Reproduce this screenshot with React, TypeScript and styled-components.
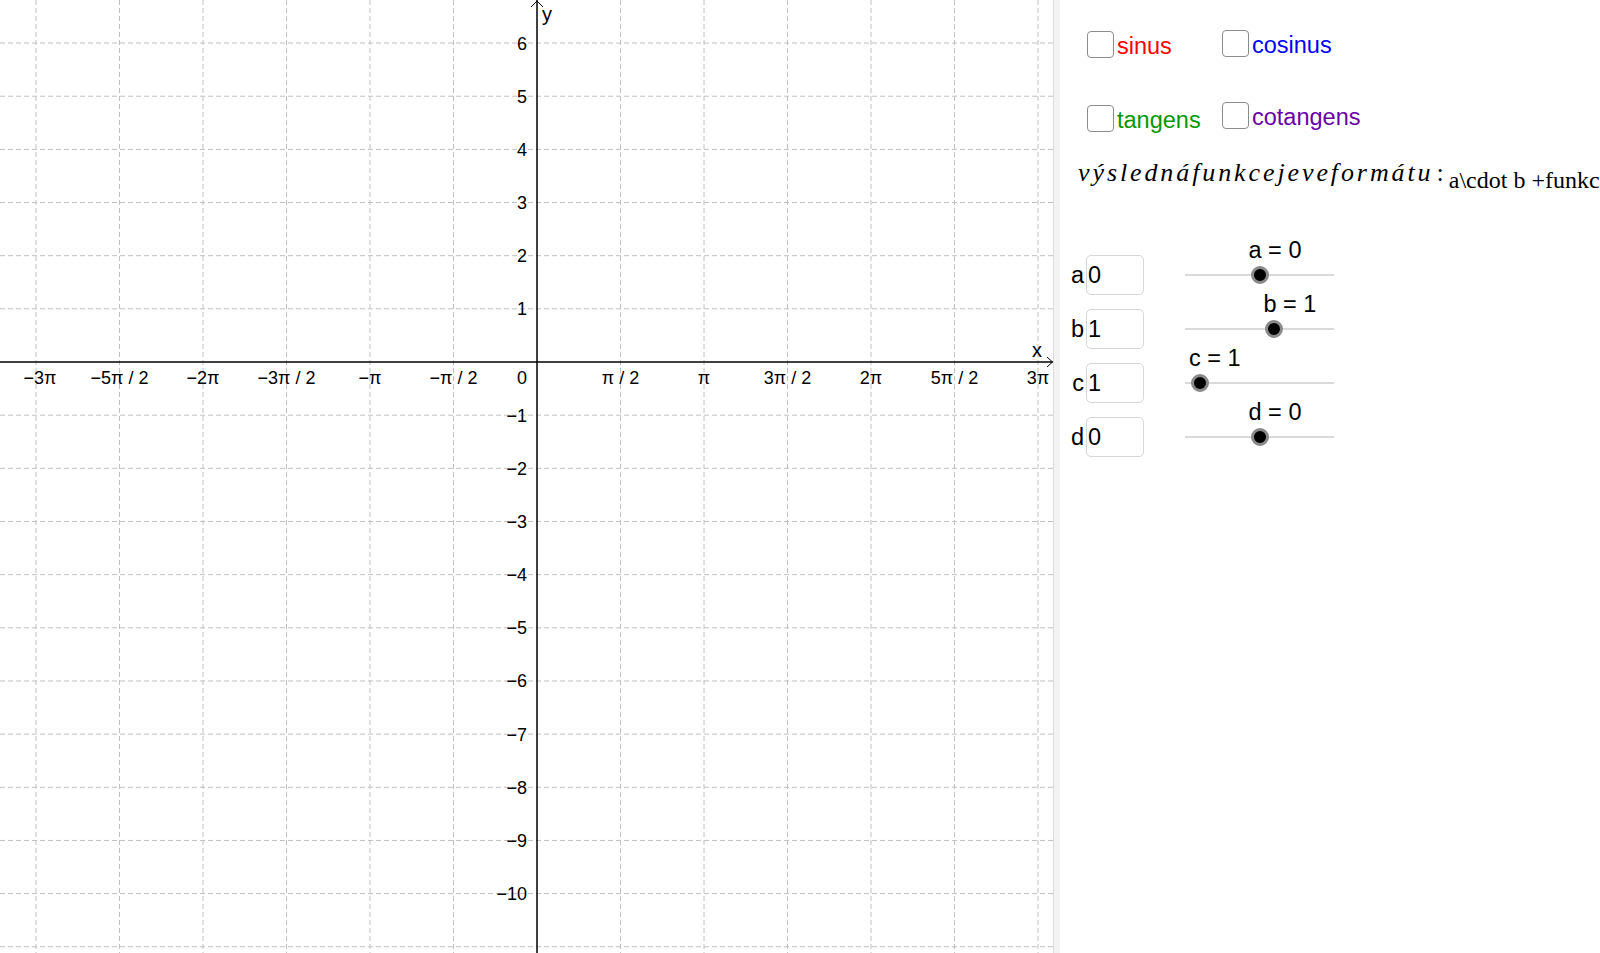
import { useState } from "react";
import styled, { createGlobalStyle } from "styled-components";

const GlobalStyle = createGlobalStyle`
  html, body {
    margin: 0;
    padding: 0;
    background: #ffffff;
    overflow: hidden;
  }
  body {
    font-family: "Liberation Sans", Arial, sans-serif;
  }
`;

// graphics view geometry (px)
const VIEW_W = 1053;
const VIEW_H = 953;
const ORIGIN_X = 537;
const ORIGIN_Y = 362;
const UNIT = 53.16;
const HALF_PI = (Math.PI / 2) * UNIT;

const toX = (k: number) => ORIGIN_X + k * HALF_PI;
const toY = (n: number) => ORIGIN_Y - n * UNIT;

const MINUS = "\u2212";

const piLabel = (k: number) => {
  const sign = k < 0 ? MINUS : "";
  const a = Math.abs(k);
  if (a % 2 === 0) {
    const m = a / 2;
    return `${sign}${m === 1 ? "" : m}π`;
  }
  return `${sign}${a === 1 ? "" : a}π / 2`;
};

const range = (from: number, to: number) =>
  Array.from({ length: to - from + 1 }, (_, i) => from + i);

const Page = styled.div`
  display: flex;
  width: 100vw;
  height: 100vh;
  overflow: hidden;
  background: #ffffff;
`;

const GraphView = styled.div`
  flex: 0 0 ${VIEW_W}px;
  height: 100%;
  overflow: hidden;
`;

const Canvas = styled.svg`
  display: block;
`;

const TickLabel = styled.text`
  font-family: "Liberation Sans", Arial, sans-serif;
  font-size: 18px;
  fill: #000000;
`;

const AxisName = styled.text`
  font-family: "Liberation Sans", Arial, sans-serif;
  font-size: 20px;
  fill: #000000;
`;

const Splitter = styled.div`
  flex: 0 0 7px;
  height: 100%;
  box-sizing: border-box;
  background: #f3f3f3;
  border-left: 1px solid #dcdcdc;
`;

const SidePanel = styled.div`
  flex: 1;
  min-width: 0;
  height: 100%;
  overflow: hidden;
  display: flex;
  flex-direction: column;
  font-family: "Liberation Sans", Arial, sans-serif;
  font-size: 23.5px;
  color: #000000;
`;

const ToggleGrid = styled.div`
  display: grid;
  grid-template-columns: 135px max-content;
  row-gap: 44px;
  align-items: start;
  margin: 30px 0 0 27px;
`;

const Toggle = styled.label<{ $color: string; $dy: number }>`
  display: flex;
  align-items: center;
  gap: 3px;
  height: 27px;
  margin-top: ${({ $dy }) => $dy}px;
  color: ${({ $color }) => $color};
  line-height: 27px;
  cursor: pointer;
  user-select: none;
`;

const CheckBox = styled.input`
  appearance: none;
  flex: none;
  width: 27px;
  height: 27px;
  margin: 0;
  box-sizing: border-box;
  border: 1.5px solid #8c8c8c;
  border-radius: 4px;
  background: #ffffff;
  cursor: pointer;
  display: grid;
  place-items: center;

  &:checked::after {
    content: "✓";
    font-size: 20px;
    line-height: 1;
    color: #333333;
  }
`;

const ToggleText = styled.span`
  position: relative;
  top: 2px;
`;

const Formula = styled.div`
  height: 30px;
  margin: 26px 0 0 18px;
  white-space: nowrap;
  line-height: 30px;
`;

const MathRun = styled.span`
  font-family: "Liberation Serif", "Times New Roman", serif;
  font-style: italic;
  font-size: 26px;
  letter-spacing: 2.9px;
`;

const MathColon = styled.span`
  font-family: "Liberation Serif", "Times New Roman", serif;
  font-size: 26px;
  margin: 0 5px 0 3px;
`;

const TextRun = styled.span`
  font-family: "Liberation Serif", "Times New Roman", serif;
  font-size: 24px;
  vertical-align: -7px;
`;

const ParamList = styled.div`
  display: flex;
  flex-direction: column;
  margin-top: 60px;
`;

const ParamRow = styled.div`
  display: flex;
  align-items: center;
  height: 54px;
`;

const ParamName = styled.span`
  width: 24px;
  margin-right: 2px;
  text-align: right;
`;

const ValueBox = styled.input`
  width: 58px;
  height: 40px;
  box-sizing: border-box;
  margin: 0;
  padding: 0 0 0 1px;
  border: 1px solid #d6d6d6;
  border-radius: 5px;
  font-family: "Liberation Sans", Arial, sans-serif;
  font-size: 23.5px;
  color: #000000;
  background: #ffffff;
  outline: none;
`;

const Slider = styled.div`
  position: relative;
  width: 149px;
  height: 18px;
  margin-left: 41px;

  &::before {
    content: "";
    position: absolute;
    left: 0;
    right: 0;
    top: 8px;
    height: 2px;
    background: #dadada;
  }
`;

const Knob = styled.div`
  position: absolute;
  top: 0;
  width: 18px;
  height: 18px;
  margin-left: -9px;
  box-sizing: border-box;
  border-radius: 50%;
  background: #000000;
  border: 3.5px solid #8a8a8a;
`;

const SliderCaption = styled.span`
  position: absolute;
  top: -27px;
  margin-left: -11px;
  line-height: 1;
  white-space: nowrap;
`;

type Param = {
  name: string;
  value: number;
  min: number;
  max: number;
};

const PARAMS: Param[] = [
  { name: "a", value: 0, min: -5, max: 5 },
  { name: "b", value: 1, min: -5, max: 5 },
  { name: "c", value: 1, min: 0, max: 10 },
  { name: "d", value: 0, min: -5, max: 5 },
];

const TOGGLES = [
  { label: "sinus", color: "#ff0000", dy: 1 },
  { label: "cosinus", color: "#0000ff", dy: 0 },
  { label: "tangens", color: "#009900", dy: 3 },
  { label: "cotangens", color: "#6a00a8", dy: 0 },
];

const Graph = () => {
  const verticals = range(-6, 6).filter((k) => k !== 0);
  const horizontals = range(-11, 6).filter((n) => n !== 0);
  const yLabels = range(-10, 6).filter((n) => n !== 0);

  return (
    <Canvas width={VIEW_W} height={VIEW_H} viewBox={`0 0 ${VIEW_W} ${VIEW_H}`}>
      <g stroke="#c0c0c0" strokeWidth={1} strokeDasharray="5 3">
        {verticals.map((k) => (
          <line key={`v${k}`} x1={toX(k)} y1={0} x2={toX(k)} y2={VIEW_H} />
        ))}
        {horizontals.map((n) => (
          <line key={`h${n}`} x1={0} y1={toY(n)} x2={VIEW_W} y2={toY(n)} />
        ))}
      </g>

      <g stroke="#000000" strokeWidth={1.5} fill="none">
        <line x1={0} y1={ORIGIN_Y} x2={VIEW_W} y2={ORIGIN_Y} />
        <line x1={ORIGIN_X} y1={0} x2={ORIGIN_X} y2={VIEW_H} />
        <polyline
          strokeWidth={1}
          points={`${VIEW_W - 6},${ORIGIN_Y - 5} ${VIEW_W - 0.5},${ORIGIN_Y} ${VIEW_W - 6},${ORIGIN_Y + 5}`}
        />
        <polyline
          strokeWidth={1}
          points={`${ORIGIN_X - 6},7 ${ORIGIN_X},1 ${ORIGIN_X + 6},7`}
        />
      </g>

      {verticals.map((k) => (
        <TickLabel
          key={`lx${k}`}
          x={toX(k) + (k === -6 ? 4 : 0)}
          y={ORIGIN_Y + 22}
          textAnchor="middle"
        >
          {piLabel(k)}
        </TickLabel>
      ))}
      <TickLabel x={ORIGIN_X - 10} y={ORIGIN_Y + 22} textAnchor="end">
        0
      </TickLabel>
      {yLabels.map((n) => (
        <TickLabel key={`ly${n}`} x={ORIGIN_X - 10} y={toY(n) + 6.5} textAnchor="end">
          {n < 0 ? `${MINUS}${-n}` : n}
        </TickLabel>
      ))}

      <AxisName x={ORIGIN_X + 5} y={21}>
        y
      </AxisName>
      <AxisName x={VIEW_W - 21} y={ORIGIN_Y - 5}>
        x
      </AxisName>
    </Canvas>
  );
};

export default function App() {
  const [checked, setChecked] = useState<Record<string, boolean>>({});

  return (
    <>
      <GlobalStyle />
      <Page>
        <GraphView>
          <Graph />
        </GraphView>
        <Splitter />
        <SidePanel>
          <ToggleGrid>
            {TOGGLES.map((t) => (
              <Toggle key={t.label} $color={t.color} $dy={t.dy}>
                <CheckBox
                  type="checkbox"
                  checked={!!checked[t.label]}
                  onChange={() =>
                    setChecked({ ...checked, [t.label]: !checked[t.label] })
                  }
                />
                <ToggleText>{t.label}</ToggleText>
              </Toggle>
            ))}
          </ToggleGrid>

          <Formula>
            <MathRun>výslednáfunkcejeveformátu</MathRun>
            <MathColon>:</MathColon>
            <TextRun>a\cdot b +funkce(c\cdot x)+d</TextRun>
          </Formula>

          <ParamList>
            {PARAMS.map((p) => {
              const frac = (p.value - p.min) / (p.max - p.min);
              return (
                <ParamRow key={p.name}>
                  <ParamName>{p.name}</ParamName>
                  <ValueBox defaultValue={String(p.value)} />
                  <Slider>
                    <SliderCaption style={{ left: `${frac * 100}%` }}>
                      {p.name} = {p.value}
                    </SliderCaption>
                    <Knob style={{ left: `${frac * 100}%` }} />
                  </Slider>
                </ParamRow>
              );
            })}
          </ParamList>
        </SidePanel>
      </Page>
    </>
  );
}
